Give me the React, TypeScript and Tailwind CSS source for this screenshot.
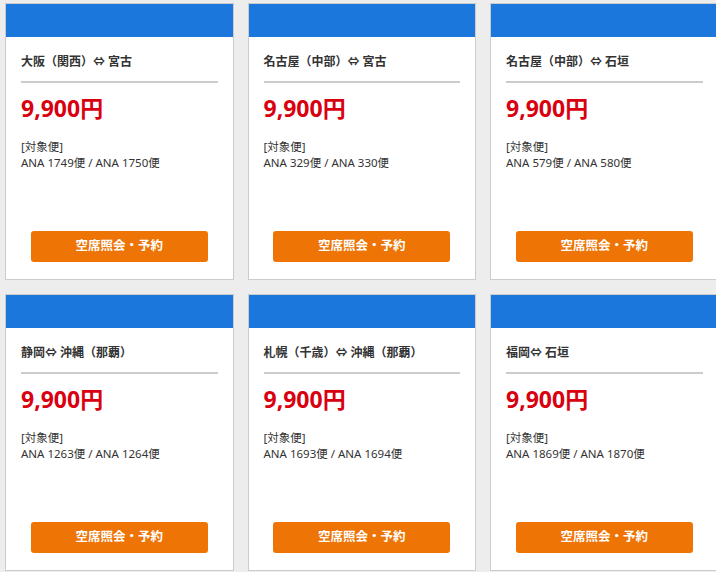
const routes = [
  { title: '大阪（関西）⇔ 宮古', flights: 'ANA 1749便 / ANA 1750便' },
  { title: '名古屋（中部）⇔ 宮古', flights: 'ANA 329便 / ANA 330便' },
  { title: '名古屋（中部）⇔ 石垣', flights: 'ANA 579便 / ANA 580便' },
  { title: '静岡⇔ 沖縄（那覇）', flights: 'ANA 1263便 / ANA 1264便' },
  { title: '札幌（千歳）⇔ 沖縄（那覇）', flights: 'ANA 1693便 / ANA 1694便' },
  { title: '福岡⇔ 石垣', flights: 'ANA 1869便 / ANA 1870便' },
];

const font = { fontFamily: '"Noto Sans", "Noto Sans CJK JP", sans-serif' };

const App = () => {
  return (
    <div className="w-[716px] h-[572px] overflow-hidden bg-[#ededed]" style={font}>
      <div className="grid grid-cols-[228.5px_228.5px_228.5px] gap-x-[14px] gap-y-[14px] pl-[5px] pt-[3px] w-max">
        {routes.map((route) => (
          <div
            key={route.title}
            className="h-[277px] bg-white border border-[#cccccc] flex flex-col"
          >
            <div className="h-[33px] bg-[#1c77dd]" />
            <div className="flex-1 flex flex-col px-[15px] pt-[16px] pb-[17px]">
              <h3 className="text-[12px] leading-[18px] font-bold text-[#333333]">
                {route.title}
              </h3>
              <div className="mt-[10px] h-[2px] bg-[#cccccc]" />
              <p className="mt-[11px] text-[23px] leading-[28px] font-bold text-[#d9000f]">
                9,900円
              </p>
              <div className="mt-[17px] text-[11.5px] leading-[16px] text-[#333333]">
                <p>[対象便]</p>
                <p>{route.flights}</p>
              </div>
              <button className="mt-auto mx-auto w-[177px] h-[31px] rounded-[3px] bg-[#ee7406] text-white text-[12.5px] font-bold">
                空席照会・予約
              </button>
            </div>
          </div>
        ))}
      </div>
    </div>
  );
};

export default App;
